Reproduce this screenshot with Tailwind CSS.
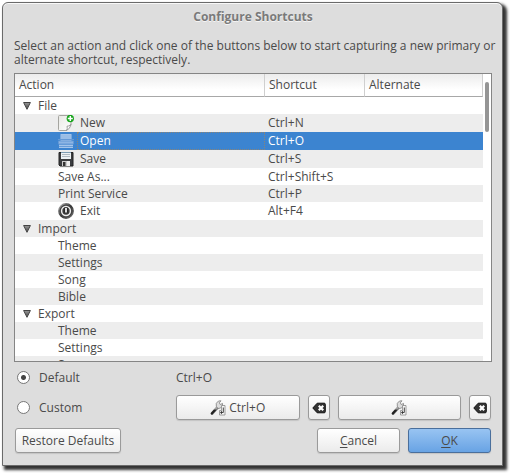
<!DOCTYPE html>
<html lang="en">
<head>
<meta charset="utf-8">
<title>Configure Shortcuts</title>
<script src="https://cdn.jsdelivr.net/npm/@tailwindcss/browser@4"></script>
</head>
<body class="bg-white font-['Open_Sans','Noto_Sans',sans-serif] text-[12px] leading-[14px] text-[#4a4a4a]">
<svg class="absolute size-0" aria-hidden="true">
  <defs>
    <linearGradient id="paper" x1="0" y1="0" x2="1" y2="1"><stop offset="0" stop-color="#e8e8e4"/><stop offset="1" stop-color="#fff"/></linearGradient>
    <linearGradient id="metal" x1="0" y1="0" x2="1" y2="1"><stop offset="0" stop-color="#bbb"/><stop offset=".5" stop-color="#333"/><stop offset="1" stop-color="#777"/></linearGradient>
    <linearGradient id="tri" x1="0" y1="0" x2="0" y2="1"><stop offset="0" stop-color="#999"/><stop offset="1" stop-color="#444"/></linearGradient>
    <symbol id="arrow" viewBox="0 0 8 8"><path d="M.6 .5H7.4L4 7.3Z" fill="url(#tri)" stroke="#444" stroke-width="1"/></symbol>
    <symbol id="wrench" viewBox="0 0 16 16">
      <path d="M2 13.500 8 7" stroke="#777" stroke-width="2.800" stroke-linecap="round"/>
      <path d="M1.800 13.500 5 10" stroke="#222" stroke-width="2" stroke-linecap="round"/>
      <path d="M5 9.500 8 6.500" stroke="#ccc" stroke-width="1" stroke-linecap="round"/>
      <path d="M6.300 6.300 6.300 3.300 8.500 1 11 .8 9.300 2.800 10.300 4.600 12.500 3.400 12.500 6 10.500 8 8 8.500Z" fill="#ddd" stroke="#8a8a8a" stroke-width=".9"/>
      <path d="M11.500 5.500H15V15H9.500V10.500H11.500Z" fill="#f5f5f5" stroke="#888" stroke-width=".8"/>
      <path d="M13.300 7.500v5h-2" fill="none" stroke="#444" stroke-width="1"/>
      <path d="M12 10.800v3.400L10 12.500z" fill="#333"/>
    </symbol>
    <symbol id="clear" viewBox="0 0 14 12">
      <path d="M.8 6 5.200 1.200H12.200Q13.300 1.200 13.300 2.300V9.700Q13.300 10.800 12.200 10.800H5.200Z" fill="#333" stroke="#111" stroke-width="1"/>
      <path d="M6.800 3.700 11.200 8.300M11.200 3.700 6.800 8.300" stroke="#fff" stroke-width="2.200"/>
    </symbol>
  </defs>
</svg>
<div class="h-screen pt-[2px] pr-[9px] pb-[8px] pl-[2px]">
<main class="flex h-full flex-col rounded-t-[6px] border border-[#6a6a6a] bg-[#dddddd] pr-[10px] pb-[12px] pl-[11px] shadow-[inset_0_1px_0_#f8f8f8,3px_3px_3px_1px_#333333]">
  <h1 class="pt-[7px] text-center font-bold text-[#7a7a7a] [text-shadow:0_1px_0_#f4f4f4]">Configure Shortcuts</h1>
  <p class="mt-[15px] -mr-2">Select an action and click one of the buttons below to start capturing a new primary or alternate shortcut, respectively.</p>
  <section class="mt-[6px] flex min-h-0 flex-1 border border-[#858585] bg-white" aria-label="Shortcuts">
    <div class="min-w-0 flex-1 overflow-hidden">
    <table class="w-full table-fixed border-separate border-spacing-0 text-left [&_td]:p-0 [&_td+td]:pl-[3px] [&_svg]:shrink-0">
      <colgroup><col><col class="w-[100px]"><col class="w-[118px]"></colgroup>
      <thead>
        <tr class="h-[23px] [&>th]:border-r [&>th]:border-b [&>th]:border-r-[#cfcfcf] [&>th]:border-b-[#a8a8a8] [&>th]:bg-linear-to-b [&>th]:from-[#ececec] [&>th]:to-white [&>th]:to-70% [&>th]:px-1 [&>th]:font-normal">
          <th>Action</th><th>Shortcut</th><th>Alternate</th>
        </tr>
      </thead>
      <tbody class="[&>tr]:h-[17px] [&>tr:nth-child(even)]:bg-[#ededed]">
        <tr><td><div class="flex items-center gap-[7px] pl-2"><svg class="size-2"><use href="#arrow"/></svg>File</div></td><td></td><td></td></tr>
        <tr><td><div class="flex h-[18px] items-center gap-[6px] pl-[43px]">
          <svg class="size-4" viewBox="0 0 16 16"><path d="M.5 1.500Q.5 .5 1.500 .5H12Q13 .5 13 1.500V10L8.500 15.500H1.500Q.5 15.500 .5 14.500Z" fill="url(#paper)" stroke="#a5a5a0"/><path d="M13 9.500Q10.500 11.500 9 11.200 9.800 13.500 8.500 15.500 12 14 13 9.500Z" fill="#fff" stroke="#888" stroke-width=".8"/><circle cx="12.300" cy="3.500" r="3.700" fill="#18a51c"/><path d="M12.300 1v5M9.800 3.500h5" stroke="#fff" stroke-width="1.500"/></svg>New</div></td><td>Ctrl+N</td><td></td></tr>
        <tr class="text-white" aria-selected="true"><td class="bg-[#3c84d0]"><div class="flex h-[18px] items-center pl-[43px]">
          <svg class="size-4" viewBox="0 0 16 16"><path d="M2.500 1h11v7h-11z" fill="#a3c3e8"/><path d="M2.500 3h11M2.500 5h11" stroke="#8fb7e4"/><path d="M0 6.500h16M.5 8h15v3H.5z" stroke="#6499d6" fill="#8db5e4"/><path d="M1 11h14v3.500H1z" fill="#679cd8"/><path d="M1 12.500h14M1 14.500h14" stroke="#a4c5eb"/></svg><span class="ml-[3px] flex h-[18px] flex-1 items-center border border-dotted border-[#8a8478] pl-[2px]">Open</span></div></td><td class="bg-[#3c84d0]">Ctrl+O</td><td class="bg-[#3c84d0]"></td></tr>
        <tr><td><div class="flex h-[18px] items-center gap-[6px] pl-[43px]">
          <svg class="size-4" viewBox="0 0 16 16"><path d="M1 1.500h14v13.500H2L1 14z" fill="#3b3d40" stroke="#222"/><path d="M3 1h10v7H3z" fill="#edf2f5"/><path d="M3 1.500h10" stroke="#7d9db5"/><path d="M4 3.500h8M4 5.500h8" stroke="#b0bac2"/><path d="M4 10h8v5H4z" fill="#ccc"/><path d="M5 11h2.500v4H5z" fill="#333"/><path d="M9 10h3v5H9z" fill="#eee"/></svg>Save</div></td><td>Ctrl+S</td><td></td></tr>
        <tr class="!bg-white"><td class="!pl-[43px]">Save As...</td><td>Ctrl+Shift+S</td><td></td></tr>
        <tr><td class="!pl-[43px]">Print Service</td><td>Ctrl+P</td><td></td></tr>
        <tr><td><div class="flex h-[18px] items-center gap-[6px] pl-[43px]">
          <svg class="size-4" viewBox="0 0 16 16"><circle cx="8" cy="8" r="7.200" fill="#444" stroke="url(#metal)" stroke-width="1.400"/><circle cx="8" cy="8" r="4.400" fill="#3a3a3a" stroke="#eee" stroke-width="1.500"/><path d="M8 4.500v5" stroke="#222" stroke-width="3.500"/><path d="M8 5v4.500" stroke="#fff" stroke-width="1.700"/></svg>Exit</div></td><td>Alt+F4</td><td></td></tr>
        <tr><td><div class="flex items-center gap-[7px] pl-2"><svg class="size-2"><use href="#arrow"/></svg>Import</div></td><td></td><td></td></tr>
        <tr><td class="!pl-[43px]">Theme</td><td></td><td></td></tr>
        <tr><td class="!pl-[43px]">Settings</td><td></td><td></td></tr>
        <tr><td class="!pl-[43px]">Song</td><td></td><td></td></tr>
        <tr><td class="!pl-[43px]">Bible</td><td></td><td></td></tr>
        <tr><td><div class="flex items-center gap-[7px] pl-2"><svg class="size-2"><use href="#arrow"/></svg>Export</div></td><td></td><td></td></tr>
        <tr><td class="!pl-[43px]">Theme</td><td></td><td></td></tr>
        <tr><td class="!pl-[43px]">Settings</td><td></td><td></td></tr>
        <tr><td class="!pl-[43px]">Song</td><td></td><td></td></tr>
      </tbody>
    </table>
    </div>
    <div class="w-[8px] px-[2px] pt-2"><div class="h-[50px] rounded-full bg-[#959595]"></div></div>
  </section>
  <div class="grid grid-cols-[153px_1fr_22px_1fr_22px] items-center gap-x-2 gap-y-[5px] px-px pt-[3px]">
    <label class="flex h-[25px] items-center gap-[9px] pl-[2px]"><input type="radio" name="mode" checked class="size-[13px] appearance-none rounded-full border border-[#777] bg-[radial-gradient(circle,#444_0_2px,#fff_3px)]">Default</label>
    <output class="col-span-4">Ctrl+O</output>
    <label class="flex h-[25px] items-center gap-[9px] pl-[2px]"><input type="radio" name="mode" class="size-[13px] appearance-none rounded-full border border-[#777] bg-white">Custom</label>
    <button class="flex h-[25px] items-center justify-center gap-[3px] rounded-[3px] border border-[#9a9a9a] bg-linear-to-b from-white to-[#ebebeb] shadow-[0_1px_1px_#c4c4c4]"><svg class="size-4"><use href="#wrench"/></svg>Ctrl+O</button>
    <button aria-label="Clear primary shortcut" class="flex h-[25px] items-center justify-center rounded-[3px] border border-[#9a9a9a] bg-linear-to-b from-white to-[#ebebeb] shadow-[0_1px_1px_#c4c4c4]"><svg class="h-3 w-[14px]"><use href="#clear"/></svg></button>
    <button aria-label="Capture alternate shortcut" class="flex h-[25px] items-center justify-center rounded-[3px] border border-[#9a9a9a] bg-linear-to-b from-white to-[#ebebeb] shadow-[0_1px_1px_#c4c4c4]"><svg class="size-4"><use href="#wrench"/></svg></button>
    <button aria-label="Clear alternate shortcut" class="flex h-[25px] items-center justify-center rounded-[3px] border border-[#9a9a9a] bg-linear-to-b from-white to-[#ebebeb] shadow-[0_1px_1px_#c4c4c4]"><svg class="h-3 w-[14px]"><use href="#clear"/></svg></button>
  </div>
  <footer class="mt-2 flex gap-2 px-px">
    <button class="mr-auto h-[25px] w-[106px] rounded-[3px] border border-[#9a9a9a] bg-linear-to-b from-white to-[#ebebeb] shadow-[0_1px_1px_#c4c4c4]">Restore Defaults</button>
    <button class="h-[25px] w-[83px] rounded-[3px] border border-[#9a9a9a] bg-linear-to-b from-white to-[#ebebeb] shadow-[0_1px_1px_#c4c4c4]"><u class="underline-offset-2">C</u>ancel</button>
    <button class="h-[25px] w-[83px] rounded-[3px] border border-[#4a6f9c] bg-linear-to-b from-[#98c4f2] to-[#68a3e4] shadow-[0_1px_1px_#c4c4c4]"><u class="underline-offset-2">O</u>K</button>
  </footer>
</main>
</div>
</body>
</html>
